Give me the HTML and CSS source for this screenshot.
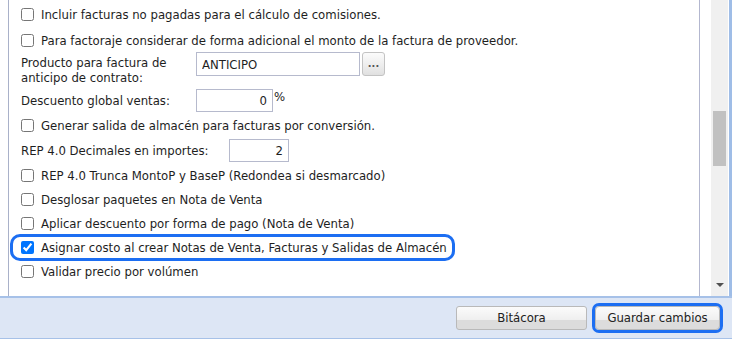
FILE: index.html
```html
<!DOCTYPE html>
<html lang="es">
<head>
  <meta charset="UTF-8" />
  <title>Configuración de ventas</title>
  <link rel="stylesheet" href="styles.css">
</head>
<body>
  <div class="frame">
    <div class="scroll-area">
      <div class="options">
        <label class="row check-row"><input type="checkbox" /> <span>Incluir facturas no pagadas para el cálculo de comisiones.</span></label>
        <label class="row check-row row-gap"><input type="checkbox" /> <span>Para factoraje considerar de forma adicional el monto de la factura de proveedor.</span></label>

        <div class="row field-row tall">
          <span class="field-label lbl-wide">Producto para factura de anticipo de contrato:</span>
          <input type="text" class="txt txt-product" value="ANTICIPO" />
          <button class="dots">...</button>
        </div>

        <div class="row field-row">
          <span class="field-label lbl-wide">Descuento global ventas:</span>
          <input type="text" class="txt txt-num txt-discount" value="0" />
          <span class="pct">%</span>
        </div>

        <label class="row check-row row-nudge"><input type="checkbox" /> <span>Generar salida de almacén para facturas por conversión.</span></label>

        <div class="row field-row row-nudge">
          <span class="field-label lbl-rep">REP 4.0 Decimales en importes:</span>
          <input type="text" class="txt txt-num txt-decimals" value="2" />
        </div>

        <label class="row check-row row-nudge"><input type="checkbox" /> <span>REP 4.0 Trunca MontoP y BaseP (Redondea si desmarcado)</span></label>
        <label class="row check-row"><input type="checkbox" /> <span>Desglosar paquetes en Nota de Venta</span></label>
        <label class="row check-row"><input type="checkbox" /> <span>Aplicar descuento por forma de pago (Nota de Venta)</span></label>
        <div class="row check-row">
          <label class="highlight"><input type="checkbox" checked /> <span>Asignar costo al crear Notas de Venta, Facturas y Salidas de Almacén</span></label>
        </div>
        <label class="row check-row"><input type="checkbox" /> <span>Validar precio por volúmen</span></label>
      </div>

      <div class="scrollbar">
        <div class="thumb"></div>
        <div class="arrow-down"></div>
      </div>
    </div>

    <div class="footer">
      <button class="btn btn-log">Bitácora</button>
      <button class="btn btn-save">Guardar cambios</button>
    </div>
  </div>
</body>
</html>
```

FILE: styles.css
```css
body {
  margin: 0;
  background-color: white;
  color: #1e1e1e;
  font-family: "DejaVu Sans Condensed", "DejaVu Sans", sans-serif;
  font-stretch: condensed;
  font-size: 13px;
}
.frame {
  width: 732px;
  height: 340px;
  display: flex;
  flex-direction: column;
}
.scroll-area {
  height: 296px;
  display: flex;
  border-right: 3px solid #9fbde7;
  box-sizing: border-box;
}
.options {
  width: 692px;
  margin-left: 8px;
  border-left: 1px solid #a9b1c9;
  border-right: 1px solid #b3b7cf;
  box-sizing: border-box;
  padding-top: 2px;
  display: flex;
  flex-direction: column;
}
.row {
  height: 24px;
  flex-shrink: 0;
  display: flex;
  align-items: center;
  padding-left: 12px;
}
.row-gap {
  margin-top: 2px;
}
.row-nudge {
  margin-top: 1px;
}
.check-row input {
  width: 13px;
  height: 13px;
  margin: 0 7px 0 0;
  accent-color: #0075ff;
}
.field-row.tall {
  height: 36px;
  align-items: flex-start;
}
.field-row.tall .field-label {
  padding-top: 3px;
  line-height: 15px;
}
.field-label {
  flex-shrink: 0;
}
.lbl-wide {
  width: 175px;
}
.lbl-rep {
  width: 208px;
}
.txt {
  height: 24px;
  border: 1px solid #b6bacd;
  box-sizing: border-box;
  font-family: inherit;
  font-stretch: condensed;
  font-size: 13px;
  color: #1e1e1e;
  padding: 0 5px;
  margin: 0;
  background: white;
}
.txt-product {
  width: 164px;
}
.txt-num {
  text-align: right;
}
.txt-discount {
  width: 77px;
  height: 23px;
}
.txt-decimals {
  width: 60px;
  height: 23px;
}
.pct {
  align-self: flex-start;
  margin-top: 1px;
  margin-left: 1px;
}
.dots {
  width: 23px;
  height: 24px;
  margin-left: 2px;
  padding: 0 0 2px;
  border: 1px solid #c3c3c3;
  border-radius: 3px;
  background: linear-gradient(#fbfbfb, #ececec 60%, #e0e0e0);
  font-family: inherit;
  font-size: 11px;
  font-weight: bold;
  color: #555;
  line-height: 1;
}
.highlight {
  display: inline-flex;
  align-items: center;
  height: 21px;
  margin-left: -8px;
  padding: 0 5px 0 8px;
  outline: 3px solid #1c6ef2;
  border-radius: 7px;
}
.scrollbar {
  width: 17px;
  margin-left: 11px;
  background-color: #f0f0f0;
  display: flex;
  flex-direction: column;
  align-items: center;
}
.thumb {
  width: 13px;
  height: 55px;
  margin-top: 111px;
  background-color: #c1c1c1;
}
.arrow-down {
  margin-top: auto;
  margin-bottom: 9px;
  width: 0;
  height: 0;
  border-left: 4px solid transparent;
  border-right: 4px solid transparent;
  border-top: 4px solid #505050;
}
.footer {
  height: 43px;
  border-top: 2px solid #a6c1e8;
  border-bottom: 1px solid #a6c1e8;
  background-color: #dde6f5;
  box-sizing: border-box;
  display: flex;
  justify-content: flex-end;
  align-items: flex-start;
  padding: 8px 12px 0 0;
  gap: 8px;
}
.btn {
  height: 24px;
  border: 1px solid #b9b9b9;
  border-radius: 3px;
  background: linear-gradient(#fbfbfb, #efefef 58%, #dcdcdc 60%, #dcdcdc);
  font-family: inherit;
  font-stretch: condensed;
  font-size: 13px;
  color: #222;
  padding: 0 0 2px;
}
.btn-log {
  width: 131px;
}
.btn-save {
  width: 125px;
  outline: 3px solid #1c6ef2;
  border-radius: 4px;
}
```
